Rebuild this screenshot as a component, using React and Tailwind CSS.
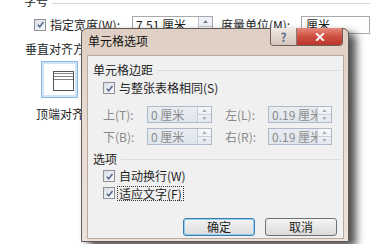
import React from "react";

function Check() {
  return (
    <span className="flex h-[12px] w-[12px] shrink-0 items-center justify-center border border-[#8d9197] bg-gradient-to-br from-[#d9dde3] to-[#fafbfc]">
      <svg viewBox="0 0 10 10" className="h-[9px] w-[9px]">
        <path d="M2 5.2 L4.2 7.6 L8.3 2.2" stroke="#52668d" strokeWidth="1.7" fill="none" />
      </svg>
    </span>
  );
}

function Spin({ border = "border-[#c5cedb]" }) {
  return (
    <span className={`flex h-full w-[14px] shrink-0 flex-col border-l ${border} bg-gradient-to-b from-[#f7f8fa] to-[#e6e9ee]`}>
      <span className={`flex flex-1 items-center justify-center border-b ${border}`}>
        <svg viewBox="0 0 6 4" className="h-[3px] w-[5px]"><path d="M0 4 L3 0 L6 4 Z" fill="#a7aeb8" /></svg>
      </span>
      <span className="flex flex-1 items-center justify-center">
        <svg viewBox="0 0 6 4" className="h-[3px] w-[5px]"><path d="M0 0 L3 4 L6 0 Z" fill="#a7aeb8" /></svg>
      </span>
    </span>
  );
}

function Field({ value, w }) {
  return (
    <div className={`flex h-[17px] ${w} items-stretch border border-[#aeb9c9] bg-gradient-to-b from-[#e9edf2] to-[#dfe5ec]`}>
      <span className="flex-1 overflow-hidden whitespace-nowrap pl-[3px] text-[12px] leading-[15px] text-[#8c8c8c]">{value}</span>
      <Spin />
    </div>
  );
}

export default function App() {
  return (
    <div className="relative h-[244px] w-[370px] overflow-hidden bg-white font-['Noto_Sans_CJK_SC','Noto_Sans',sans-serif] text-[12px] text-[#1e1e1e]">
      {/* background word dialog */}
      <div className="flex h-[10px] items-start pl-[24px]">
        <span className="-mt-[6px] leading-[14px]">字号</span>
        <span className="ml-[4px] mt-[3px] h-px flex-1 bg-[#d6d6d6]" />
      </div>
      <div className="mt-[6px] flex h-[17px] items-center">
        <span className="ml-[34px]"><Check /></span>
        <span className="ml-[4px] w-[78px] whitespace-nowrap leading-[14px]">指定宽度(W):</span>
        <div className="ml-[4px] flex h-[17px] w-[81px] items-stretch border border-[#a9a9a9] bg-white">
          <span className="flex-1 pl-[3px] leading-[15px]">7.51 厘米</span>
          <span className="flex w-[14px] flex-col border-l border-[#bfc6cf]">
            <span className="flex h-[10px] items-center justify-center border-b border-[#bfc6cf] bg-[#eef1f5]">
              <svg viewBox="0 0 6 4" className="h-[3px] w-[5px]"><path d="M0 4 L3 0 L6 4 Z" fill="#6f7a88" /></svg>
            </span>
          </span>
        </div>
        <span className="ml-[8px] w-[78px] whitespace-nowrap leading-[14px]">度量单位(M):</span>
        <div className="ml-[2px] h-[18px] flex-1 border border-[#a9a9a9] bg-white pl-[4px] leading-[15px]">厘米</div>
      </div>
      <div className="mt-[9px] pl-[25px] leading-[14px]">垂直对齐方式</div>
      <div className="ml-[41px] mt-[5px] h-[37px] w-[37px] border border-[#8ab9e6] bg-[#cfe3f6] p-[2px]">
        <div className="flex h-full w-full flex-col bg-white pl-[9px] pr-[1px] pt-[7px]">
          <div className="flex h-[20px] flex-col border border-[#555] bg-white">
            <div className="mt-[1px] h-px bg-[#888]" />
            <div className="mt-[2px] h-px bg-[#888]" />
            <div className="mt-[2px] h-px bg-[#888]" />
          </div>
        </div>
      </div>
      <div className="mt-[9px] pl-[36px] leading-[14px]">顶端对齐</div>

      {/* dialog */}
      <div className="absolute left-[81px] top-[28px] flex h-[214px] w-[268px] flex-col rounded-t-[6px] border border-[#5f5a57] bg-gradient-to-b from-[#dfcfc4] via-[#e9ddd4] to-[#ece2da] shadow-[7px_5px_8px_rgba(0,0,0,0.7)]">
        <div className="relative flex h-[26px] shrink-0 items-start">
          <span className="ml-[6px] mt-[5px] leading-[14px] text-[#111]">单元格选项</span>
          <div className="absolute right-[5px] top-[-1px] flex h-[18px] overflow-hidden rounded-b-[4px] border border-t-0 border-[#6e605a]">
            <div className="flex w-[26px] items-center justify-center border-r border-[#8a7a72] bg-gradient-to-b from-[#f1e9e3] to-[#d5c6bc] text-[12px] font-bold leading-none text-[#5d6f89]">?</div>
            <div className="flex w-[45px] items-center justify-center bg-gradient-to-b from-[#e58a7c] via-[#cf4e42] to-[#b8352b]">
              <svg viewBox="0 0 10 9" className="h-[8px] w-[10px]">
                <path d="M1.5 1 L8.5 8 M8.5 1 L1.5 8" stroke="#fff" strokeWidth="2.2" strokeLinecap="square" />
              </svg>
            </div>
          </div>
        </div>
        <div className="mb-[2px] ml-[5px] mr-[4px] flex flex-1 flex-col border border-[#b9aaa0] bg-[#f0f0f0]">
          <div className="mt-[6px] flex h-[16px] items-center pl-[5px]">
            <span className="leading-[14px]">单元格边距</span>
            <span className="ml-[4px] mr-[3px] h-px flex-1 bg-[#dcdcdc]" />
          </div>
          <div className="mt-[2px] flex h-[16px] items-center pl-[15px]">
            <Check />
            <span className="ml-[4px] leading-[14px]">与整张表格相同(S)</span>
          </div>
          <div className="mt-[10px] flex h-[17px] items-center pl-[15px]">
            <span className="w-[44px] leading-[14px] text-[#8a8a8a]">上(T):</span>
            <Field value="0 厘米" w="w-[65px]" />
            <span className="ml-[13px] w-[43px] leading-[14px] text-[#8a8a8a]">左(L):</span>
            <Field value="0.19 厘米" w="w-[64px]" />
          </div>
          <div className="mt-[5px] flex h-[17px] items-center pl-[15px]">
            <span className="w-[44px] leading-[14px] text-[#8a8a8a]">下(B):</span>
            <Field value="0 厘米" w="w-[65px]" />
            <span className="ml-[13px] w-[43px] leading-[14px] text-[#8a8a8a]">右(R):</span>
            <Field value="0.19 厘米" w="w-[64px]" />
          </div>
          <div className="mt-[6px] flex h-[16px] items-center pl-[5px]">
            <span className="leading-[14px]">选项</span>
            <span className="ml-[4px] mr-[3px] h-px flex-1 bg-[#dcdcdc]" />
          </div>
          <div className="mt-[1px] flex h-[16px] items-center pl-[15px]">
            <Check />
            <span className="ml-[4px] leading-[14px]">自动换行(W)</span>
          </div>
          <div className="mt-[1px] flex h-[16px] items-center pl-[15px]">
            <Check />
            <span className="ml-[2px] border border-dotted border-[#333] px-[1px] leading-[13px]">适应文字(F)</span>
          </div>
          <div className="mt-[17px] flex h-[18px] items-stretch pl-[95px]">
            <div className="flex w-[72px] items-center justify-center rounded-[3px] border border-[#3d7bad] bg-gradient-to-b from-[#f3f3f3] to-[#dcdcdc] shadow-[inset_0_0_0_1px_#8fd0f3] leading-[14px]">确定</div>
            <div className="ml-[10px] flex w-[72px] items-center justify-center rounded-[3px] border border-[#707070] bg-gradient-to-b from-[#f4f4f4] to-[#dadada] leading-[14px]">取消</div>
          </div>
        </div>
      </div>
    </div>
  );
}
